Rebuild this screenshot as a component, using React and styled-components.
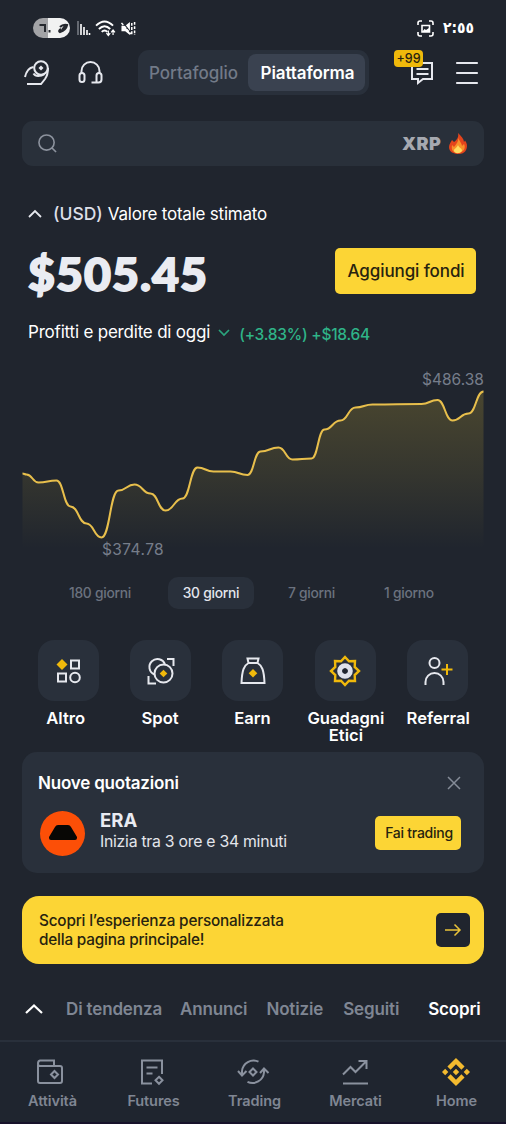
import React from 'react';
import styled, { createGlobalStyle } from 'styled-components';
import { SiBinance } from 'react-icons/si';

const GlobalStyle = createGlobalStyle`
  * {
    box-sizing: border-box;
  }

  body {
    margin: 0;
    background: #20252e;
  }

  button {
    border: 0;
    padding: 0;
    background: none;
    font-family: inherit;
    color: inherit;
  }
`;

const Screen = styled.div`
  width: 506px;
  height: 1124px;
  overflow: hidden;
  display: flex;
  flex-direction: column;
  background: #20252e;
  border-bottom: 2px solid #17122a;
  color: #fff;
  font-family: Inter, 'Liberation Sans', sans-serif;
  white-space: nowrap;
`;

const Label = styled.span`
  margin-left: ${p => p.$before || 0}px;
  font-size: ${p => p.$size}px;
  font-weight: ${p => p.$weight || 500};
  letter-spacing: ${p => p.$track || 0}px;
  color: ${p => p.$color || '#fff'};
  line-height: 20px;
`;

const Icon = styled.svg`
  display: block;
  flex: none;
  margin-left: ${p => p.$before || 0}px;
  fill: none;
  stroke: ${p => p.$stroke || '#e6e8ee'};
  stroke-width: ${p => p.$line || 2};
  stroke-linecap: ${p => p.$cap || 'butt'};
  overflow: visible;
`;

/* status bar */

const StatusBar = styled.div`
  height: 50px;
  padding: 6px 32px 0 33px;
  display: flex;
  align-items: center;
  gap: 6px;
`;

const Battery = styled.div`
  width: 37px;
  height: 20px;
  margin-right: 1px;
  border-radius: 10px;
  background: linear-gradient(90deg, #a2a3a6 40%, #f1f2f2 40%);
`;

const Clock = styled.span`
  margin-left: 3px;
  font-family: 'DejaVu Sans Condensed', 'DejaVu Sans', sans-serif;
  font-stretch: condensed;
  font-size: 15.5px;
  font-weight: bold;
  letter-spacing: -1.2px;
  line-height: 20px;
  direction: ltr;
  unicode-bidi: bidi-override;
`;

const Spacer = styled.div`
  flex: 1;
`;

/* top bar */

const TopBar = styled.header`
  height: 45px;
  padding: 0 28px 0 24px;
  display: flex;
  align-items: center;
`;

const Toggle = styled.div`
  width: 231px;
  height: 45px;
  margin-left: 35px;
  padding: 4px;
  display: flex;
  border-radius: 11px;
  background: #29303b;
`;

const ToggleItem = styled.button`
  width: ${p => p.$width}px;
  padding-right: ${p => (p.$active ? 0 : 3)}px;
  padding-left: ${p => (p.$active ? 2 : 0)}px;
  border-radius: 8px;
  background: ${p => (p.$active ? '#3a4250' : 'transparent')};
`;

const Messages = styled.div`
  position: relative;
  margin-left: 41px;
  margin-right: 21px;
`;

const Badge = styled.span`
  position: absolute;
  left: -16px;
  top: -11px;
  width: 29px;
  height: 17px;
  border-radius: 4px;
  background: #f0b90b;
  color: #2b2410;
  font-size: 12.5px;
  font-weight: 500;
  line-height: 18px;
  text-align: center;
`;

const Search = styled.div`
  height: 45px;
  margin: 26px 22px 0;
  padding: 0 16px 0 16px;
  display: flex;
  align-items: center;
  gap: 7px;
  border-radius: 11px;
  background: #29303a;
`;

/* balance */

const EstimateRow = styled.div`
  margin: 38px 28px 0;
  height: 20px;
  display: flex;
  align-items: center;
`;

const BalanceRow = styled.div`
  margin: 24px 30px 0 28px;
  height: 46px;
  display: flex;
  align-items: center;
  justify-content: space-between;
`;

const Balance = styled.div`
  font-family: Lato, Inter, sans-serif;
  font-size: 46.5px;
  font-weight: 900;
  letter-spacing: 1px;
  line-height: 46px;
  color: #eaecf2;
  -webkit-text-stroke: 1.8px #eaecf2;
  padding-top: 3px;
`;

const YellowButton = styled.button`
  width: ${p => p.$width}px;
  height: ${p => p.$height}px;
  border-radius: 5px;
  background: #fcd535;
`;

const PnlRow = styled.div`
  margin: 28px 28px 0;
  height: 20px;
  display: flex;
  align-items: center;
`;

const Change = styled.span`
  margin-left: 9px;
  padding-top: 5px;
  font-size: 15.5px;
  font-weight: 500;
  letter-spacing: -0.25px;
  line-height: 20px;
  color: #2fb488;
`;

/* chart */

const ChartBox = styled.div`
  position: relative;
  margin: 18px 22px 0;
  height: 217px;
`;

const ChartLabel = styled.span`
  position: absolute;
  left: ${p => p.$left}px;
  top: ${p => p.$top}px;
  font-size: 15.5px;
  letter-spacing: ${p => p.$track || 0}px;
  line-height: 20px;
  color: #767d8a;
`;

const Periods = styled.div`
  display: grid;
  grid-template-columns: 86px 86px 65px 80px;
  column-gap: 25px;
  height: 32px;
  padding-left: 57px;
`;

const Period = styled.button`
  border-radius: 10px;
  background: ${p => (p.$active ? '#29303b' : 'transparent')};
  color: ${p => (p.$active ? '#e3e6ed' : '#6b727f')};
  font-size: 13.8px;
  font-weight: 500;
  letter-spacing: -0.25px;
`;

/* shortcuts */

const Shortcuts = styled.div`
  margin: 31px 22px 0;
  display: grid;
  grid-template-columns: repeat(5, 92.4px);
  height: 112px;
`;

const Shortcut = styled.div`
  display: flex;
  flex-direction: column;
  align-items: center;
  gap: 9px;
`;

const Tile = styled.div`
  width: 61px;
  height: 61px;
  display: flex;
  align-items: center;
  justify-content: center;
  border-radius: 16px;
  background: #29303b;
`;

const ShortcutName = styled.div`
  margin-left: ${p => p.$shift || 0}px;
  font-size: 16.6px;
  font-weight: 600;
  line-height: 17px;
  text-align: center;
  white-space: pre-line;
`;

/* cards */

const Listing = styled.section`
  margin: 0 22px;
  height: 121px;
  padding: 20px 23px 0 16px;
  border-radius: 15px;
  background: #29303b;
`;

const ListingHead = styled.div`
  display: flex;
  height: 22px;
  padding-right: 1px;
  align-items: center;
  justify-content: space-between;
`;

const ListingBody = styled.div`
  display: flex;
  align-items: center;
  height: 46px;
  margin-top: 16px;
`;

const Coin = styled.div`
  width: 45px;
  height: 45px;
  margin: 0 15px 0 2px;
  display: flex;
  align-items: center;
  justify-content: center;
  border-radius: 50%;
  background: #fc4f07;
`;

const CoinText = styled.div`
  display: flex;
  flex-direction: column;
  gap: 2px;
  flex: 1;
  padding-bottom: 5px;
`;

const Banner = styled.section`
  margin: 23px 22px 0;
  height: 68px;
  padding: 0 14px 0 17px;
  display: flex;
  align-items: center;
  justify-content: space-between;
  border-radius: 17px;
  background: #fcd535;
  color: #27230f;
  font-size: 15.3px;
  font-weight: 500;
  letter-spacing: -0.18px;
  line-height: 19px;
`;

const ArrowButton = styled.button`
  width: 34px;
  height: 34px;
  display: flex;
  align-items: center;
  justify-content: center;
  border-radius: 5px;
  background: #20252e;
`;

/* feed tabs and bottom navigation */

const FeedTabs = styled.div`
  height: 76px;
  padding: 14px 25px 0;
  display: flex;
  align-items: center;
`;

const FeedTab = styled.span`
  margin-left: ${p => p.$before}px;
  font-size: 17px;
  font-weight: 600;
  letter-spacing: -0.15px;
  line-height: 20px;
  color: ${p => (p.$active ? '#fff' : '#7f8693')};
`;

const BottomNav = styled.nav`
  flex: 1;
  border-top: 2px solid #29303b;
  padding: 16px 0 0 2px;
  display: grid;
  grid-template-columns: repeat(5, 101px);
  background: #1f252f;
`;

const NavItem = styled.div`
  display: flex;
  flex-direction: column;
  align-items: center;
  gap: 5px;
`;

const NavIcon = styled.div`
  height: 28px;
  margin-right: ${p => p.$shift || 0}px;
  display: flex;
  align-items: center;
  color: #f3ba2f;
`;

const points = [
  [0, 103], [4, 104], [16, 112], [34, 110], [48, 136], [64, 153], [79, 167],
  [96, 120], [112, 114], [128, 123], [143, 140], [160, 128], [175, 97],
  [191, 101], [208, 101], [225, 104.5], [238, 81], [256, 77], [270, 89],
  [289, 88], [302, 59], [318, 50], [333, 37], [350, 34], [399, 33.5],
  [415, 29.5], [430, 50], [446, 43], [461, 21],
];

const linePath = points.reduce((d, [x, y], i) => {
  if (i === 0) return `M${x} ${y}`;
  const [px, py] = points[i - 1];
  const mid = (px + x) / 2;
  return `${d}C${mid} ${py} ${mid} ${y} ${x} ${y}`;
}, '');

const Chart = () => (
  <ChartBox>
    <svg width="462" height="217" viewBox="-0.5 -10.5 462 217">
      <defs>
        <linearGradient id="area" gradientUnits="userSpaceOnUse" x1="0" y1="20" x2="0" y2="178">
          <stop offset="0" stopColor="#fcd535" stopOpacity="0.19" />
          <stop offset="0.5" stopColor="#fcd535" stopOpacity="0.1" />
          <stop offset="1" stopColor="#fcd535" stopOpacity="0" />
        </linearGradient>
      </defs>
      <path d={`${linePath}V178H0Z`} fill="url(#area)" />
      <path d={linePath} fill="none" stroke="#e8bf4c" strokeWidth="2" />
    </svg>
    <ChartLabel $left={400} $top={9.5}>$486.38</ChartLabel>
    <ChartLabel $left={80} $top={180} $track={0.4}>$374.78</ChartLabel>
  </ChartBox>
);

const Fire = () => (
  <svg width="20" height="22" viewBox="0 0 20 22">
    <path d="M10 0C13 3 16 6 16 9L17 7.500C19 10 19.500 13 18.500 16C17 20 14 21 10 21S1 19 1 14C1 11 3 9 4 7L6 9C9 7 11 4 10 0Z" fill="#e4441c" />
    <path d="M10 4C11 8 14 10 14 13L16 11C18 15 16 19 10 20C5 20 3 17 4 12L6 14C8 11 11 9 10 4Z" fill="#f8902a" />
    <path d="M10 12C11 15 14 15 14 17.500C13 21 6 21 6 17.500C6 15.500 9 15 10 12Z" fill="#ffdc60" />
  </svg>
);

const shortcuts = [
  {
    name: 'Altro',
    shift: -5,
    icon: (
      <Icon width="26" height="26" viewBox="0 0 26 26">
        <path d="M7 1L12.5 6.5L7 12L1.5 6.5Z" fill="#f0b90b" stroke="none" />
        <path d="M16 2.5h8v8h-8zM3 15.500h8v8H3z" />
        <circle cx="20" cy="19.500" r="4.800" />
      </Icon>
    ),
  },
  {
    name: 'Spot',
    shift: -1,
    icon: (
      <Icon width="28" height="28" viewBox="0 0 28 28">
        <path d="M20 2h6.500v7M1.500 19v7.500H9M7.500 17.500A8 8 0 1 1 18 7.500" />
        <circle cx="16.500" cy="16.500" r="9" />
        <path d="M16.500 12.700l3.800 3.800l-3.800 3.800l-3.800-3.800z" fill="#f0b90b" stroke="none" />
      </Icon>
    ),
  },
  {
    name: 'Earn',
    shift: -1,
    icon: (
      <Icon width="26" height="28" viewBox="0 0 26 28">
        <path d="M8.500 6L7.500 1.500h11L17.500 6M8.500 6h9C22 8.500 24 13 24.500 26h-23C2 13 4 8.500 8.500 6z" />
        <path d="M13 12l4.300 4.300l-4.300 4.300l-4.300-4.300z" fill="#f0b90b" stroke="none" />
      </Icon>
    ),
  },
  {
    name: 'Guadagni\nEtici',
    shift: 1,
    icon: (
      <Icon width="32" height="32" viewBox="0 0 32 32">
        <path
          d="M16 2L20 6.300L26 6L25.700 12L30 16L25.700 20L26 26L20 25.700L16 30L12 25.700L6 26L6.300 20L2 16L6.300 12L6 6L12 6.300Z"
          stroke="#f0b90b"
          strokeWidth="2.400"
        />
        <circle cx="16" cy="16" r="5.300" stroke="#dfe2ea" strokeWidth="5" />
        <path d="M16 13l3 3l-3 3l-3-3z" fill="#20252e" stroke="none" />
      </Icon>
    ),
  },
  {
    name: 'Referral',
    shift: 1,
    icon: (
      <Icon width="28" height="28" viewBox="0 0 28 28">
        <circle cx="10.500" cy="6" r="5" />
        <path d="M1.500 28v-3a9 9 0 0 1 18 0v3" />
        <path d="M23 7v11M17.500 12.500h11" stroke="#f0b90b" />
      </Icon>
    ),
  },
];

const nav = [
  {
    name: 'Attività',
    shift: 5,
    icon: (
      <Icon width="28" height="26" viewBox="0 0 28 26" $stroke="#8a919e">
        <path d="M2 5.500V22q0 2 2 2h20q2 0 2-2V9q0-2-2-2H4Q2 7 2 4.500T4 1.500h14V7" />
        <path d="M18.500 12l3.500 3.500l-3.500 3.500l-3.500-3.500z" />
      </Icon>
    ),
  },
  {
    name: 'Futures',
    shift: 3,
    icon: (
      <Icon width="24" height="26" viewBox="0 0 24 26" $stroke="#8a919e">
        <path d="M12 24.500H2v-23h20V15M6.500 8.500h11M6.500 14.500h6" />
        <path d="M19 17.800l3.500 3.500l-3.500 3.500l-3.500-3.500z" />
      </Icon>
    ),
  },
  {
    name: 'Trading',
    shift: 3,
    icon: (
      <Icon width="32" height="26" viewBox="0 0 32 26" $stroke="#8a919e">
        <path d="M21.500 2.700A11.500 11.500 0 0 0 5 12v4M1 12l4 4.500l4.500-4.500" />
        <path d="M10.500 22.800A11.500 11.500 0 0 0 27 13.500V10M23 14l4-4.500l4.500 4.500" />
        <path d="M16 9.500l3.500 3.500l-3.500 3.500l-3.500-3.500z" />
      </Icon>
    ),
  },
  {
    name: 'Mercati',
    shift: 2,
    icon: (
      <Icon width="26" height="26" viewBox="0 0 26 26" $stroke="#8a919e">
        <path d="M1 15.500L8.500 8l5 5L24 2.500M16.500 2h8v8M1 24.500h25" />
      </Icon>
    ),
  },
  { name: 'Home', shift: 1, icon: <SiBinance size={28} /> },
];

export default function App() {
  return (
    <Screen>
      <GlobalStyle />
      <StatusBar>
        <Battery>
          <Icon width="37" height="20" viewBox="0 0 37 20" $stroke="#25282e">
            <path d="M6.500 7h5.500v7M16.500 12v2.500" />
            <path d="M27 9q3-3 7-2q-1 5-7 7q-2-1 1-3M33 7l-4 5" strokeWidth="2.200" />
          </Icon>
        </Battery>
        <Icon width="13" height="14" viewBox="0 0 13 14" $stroke="#fff" $line="1.600">
          <path d="M1 0v14" stroke="#777b83" />
          <path d="M4 3v11M7 6v8M10 9v5M12.500 12v2" />
        </Icon>
        <Icon width="19" height="17" viewBox="0 0 20 18" $stroke="#fff">
          <path d="M0 6q9-9 18 0M3 9.500q6-6 12 0M6 12.500q3-3 6 0" />
          <path d="M13 11v5M11 14l2 2.500l2-2.500M18 16v-5M16 13l2-2.500l2 2.500" strokeWidth="1.300" />
        </Icon>
        <Icon width="15" height="15" viewBox="0 0 15 16" $stroke="#fff" $line="1.600">
          <path d="M0 5h4l5-4v14l-5-4H0z" fill="#fff" stroke="none" />
          <path d="M1 1l10 13" stroke="#20252e" />
          <path d="M0 2l10 12M11 2v12M14 1v14" strokeDasharray="3 1.500" />
        </Icon>
        <Spacer />
        <Icon width="17" height="17" viewBox="0 0 17 17" $stroke="#fff" $line="1.600">
          <path d="M5 1H3Q1 1 1 3v2M12 1h2q2 0 2 2v2M1 12v2q0 2 2 2h2M16 12v2q0 2-2 2h-2" />
          <path d="M5 5.500h7.500v6.500H5z" />
          <path d="M5 12l2.500-3l1.500 1L12 8v4z" fill="#fff" stroke="none" />
        </Icon>
        <Clock>٢:٥٥</Clock>
      </StatusBar>

      <TopBar>
        <Icon width="26" height="26" viewBox="0 0 26 26">
          <circle cx="17" cy="8" r="6.800" />
          <path d="M17 5.500l2.500 2.500l-2.500 2.500l-2.500-2.500z" fill="#e6e8ee" stroke="none" />
          <path d="M1 17Q3 8 9.500 7M9.500 13.500q2 3.500 8 2l3-1.500M24 8q0 7-3 11l-4 5H3" />
        </Icon>
        <Spacer />
        <Icon width="25" height="23" viewBox="0 0 25 23">
          <path d="M3.500 12V10a9 9 0 0 1 18 0v2" />
          <rect x="1.500" y="12" width="5" height="9" rx="2.500" />
          <path d="M13.500 21.500h7q3 0 3-3v-4q0-2.500-2.500-2.500t-2.500 2.500v6.500" />
        </Icon>
        <Toggle>
          <ToggleItem $width={106}>
            <Label $size={17} $color="#727a88">Portafoglio</Label>
          </ToggleItem>
          <ToggleItem $width={117} $active>
            <Label $size={17} $weight={600} $track={-0.1}>Piattaforma</Label>
          </ToggleItem>
        </Toggle>
        <Messages>
          <Icon width="24" height="24" viewBox="0 0 24 24">
            <path d="M2 2h20v16h-9l-5 4v-4H2zM6.500 8h12M6.500 13h12" />
          </Icon>
          <Badge>+99</Badge>
        </Messages>
        <Icon width="23" height="22" viewBox="0 0 23 22" $line="2.200" $cap="round">
          <path d="M2 1h20M2 11h20M2 21h20" />
        </Icon>
      </TopBar>

      <Search>
        <Icon width="19" height="19" viewBox="0 0 20 20" $stroke="#8c929d" $line="1.700">
          <circle cx="9" cy="9" r="8" />
          <path d="M14.500 14.500l4.500 4.500" />
        </Icon>
        <Spacer />
        <Label $size={18} $weight={900} $track={0.3} $color="#a6a9b0">XRP</Label>
        <Fire />
      </Search>

      <EstimateRow>
        <Icon width="14" height="8" viewBox="0 0 14 8" $line="1.800">
          <path d="M1 7l6-6l6 6" />
        </Icon>
        <Label $before={11} $size={17.5} $color="#dcdfe8">(USD)</Label>
        <Label $before={5} $size={17} $weight={400} $track={-0.22}>Valore totale stimato</Label>
      </EstimateRow>

      <BalanceRow>
        <Balance>$505.45</Balance>
        <YellowButton $width={141} $height={46}>
          <Label $before={1} $size={17} $track={-0.1} $color="#27230f">Aggiungi fondi</Label>
        </YellowButton>
      </BalanceRow>

      <PnlRow>
        <Label $size={17} $weight={400} $track={-0.2}>Profitti e perdite di oggi</Label>
        <Icon $before={8} width="12" height="7" viewBox="0 0 12 7" $stroke="#2ba57d" $line="1.700">
          <path d="M1 1l5 5l5-5" />
        </Icon>
        <Change>(+3.83%) +$18.64</Change>
      </PnlRow>

      <Chart />

      <Periods>
        <Period>180 giorni</Period>
        <Period $active>30 giorni</Period>
        <Period>7 giorni</Period>
        <Period>1 giorno</Period>
      </Periods>

      <Shortcuts>
        {shortcuts.map(s => (
          <Shortcut key={s.name}>
            <Tile>{s.icon}</Tile>
            <ShortcutName $shift={s.shift}>{s.name}</ShortcutName>
          </Shortcut>
        ))}
      </Shortcuts>

      <Listing>
        <ListingHead>
          <Label $size={17} $weight={600} $track={-0.2}>Nuove quotazioni</Label>
          <Icon width="12" height="12" viewBox="0 0 12 12" $stroke="#858c98" $line="1.500">
            <path d="M0 0l12 12M12 0L0 12" />
          </Icon>
        </ListingHead>
        <ListingBody>
          <Coin>
            <svg width="28" height="16" viewBox="0 0 28 16">
              <path d="M9 0h10q2 0 3 2l6 10v1q0 2-2 2H2q-2 0-2-2v-1L6 2q1-2 3-2z" fill="#080705" />
            </svg>
          </Coin>
          <CoinText>
            <Label $size={18.5} $weight={700} $color="#e9ebf2">ERA</Label>
            <Label $size={15.8} $weight={400} $track={-0.26} $color="#e3e5eb">
              Inizia tra 3 ore e 34 minuti
            </Label>
          </CoinText>
          <YellowButton $width={86} $height={34}>
            <Label $before={2} $size={14} $track={-0.25} $color="#27230f">Fai trading</Label>
          </YellowButton>
        </ListingBody>
      </Listing>

      <Banner>
        <div>
          Scopri l’esperienza personalizzata
          <br />
          della pagina principale!
        </div>
        <ArrowButton>
          <Icon width="16" height="12" viewBox="0 0 16 12" $stroke="#e9c33a" $line="1.500">
            <path d="M0 6h15M9.500 0.500l5.500 5.500l-5.500 5.500" />
          </Icon>
        </ArrowButton>
      </Banner>

      <FeedTabs>
        <Icon width="18" height="10" viewBox="0 0 18 10" $stroke="#fff" $line="2.200">
          <path d="M1 9l8-7.500l8 7.500" />
        </Icon>
        <FeedTab $before={23}>Di tendenza</FeedTab>
        <FeedTab $before={18}>Annunci</FeedTab>
        <FeedTab $before={19}>Notizie</FeedTab>
        <FeedTab $before={20}>Seguiti</FeedTab>
        <FeedTab $before={29} $active>Scopri</FeedTab>
      </FeedTabs>

      <BottomNav>
        {nav.map(n => (
          <NavItem key={n.name}>
            <NavIcon $shift={n.shift}>{n.icon}</NavIcon>
            <Label $size={14.5} $weight={600} $track={-0.1} $color="#7f8693">{n.name}</Label>
          </NavItem>
        ))}
      </BottomNav>
    </Screen>
  );
}
